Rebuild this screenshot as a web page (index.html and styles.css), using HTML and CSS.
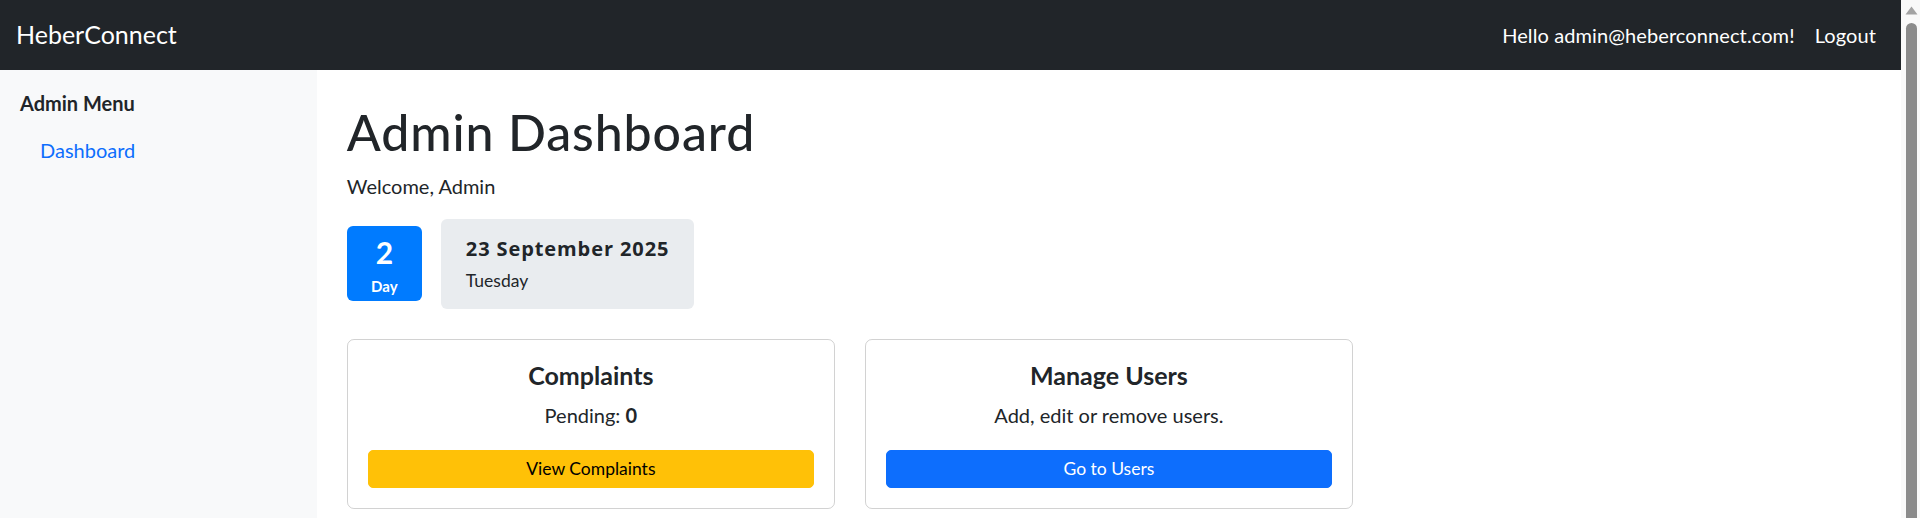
FILE: index.html
```html
<!DOCTYPE html>
<html lang="en">
<head>
<meta charset="utf-8">
<title>Admin Dashboard - HeberConnect</title>
<link rel="stylesheet" href="styles.css">
</head>
<body>
<div class="viewport">
  <nav class="navbar">
    <a class="brand" href="#">HeberConnect</a>
    <div class="nav-right">
      <span class="nav-link">Hello admin@heberconnect.com!</span>
      <a class="nav-link" href="#">Logout</a>
    </div>
  </nav>
  <div class="layout">
    <aside class="sidebar">
      <h6 class="sidebar-title">Admin Menu</h6>
      <ul class="side-nav">
        <li><a class="side-link" href="#">Dashboard</a></li>
      </ul>
    </aside>
    <main class="main">
      <h1 class="page-title">Admin Dashboard</h1>
      <p class="welcome">Welcome, Admin</p>
      <div class="date-row">
        <div class="day-box">
          <span class="day-num">2</span>
          <span class="day-label">Day</span>
        </div>
        <div class="date-box">
          <div class="date-main">23 September 2025</div>
          <div class="date-sub">Tuesday</div>
        </div>
      </div>
      <div class="cards">
        <div class="card">
          <h5 class="card-title">Complaints</h5>
          <p class="card-text">Pending: <strong>0</strong></p>
          <a class="btn btn-warning" href="#">View Complaints</a>
        </div>
        <div class="card">
          <h5 class="card-title">Manage Users</h5>
          <p class="card-text">Add, edit or remove users.</p>
          <a class="btn btn-primary" href="#">Go to Users</a>
        </div>
      </div>
    </main>
  </div>
</div>
<div class="scrollbar">
  <svg class="scroll-arrow" width="13" height="9" viewBox="0 0 13 9"><path d="M6.5 0.5 L12.5 8.5 L0.5 8.5 Z" fill="#a3a3a3"/></svg>
  <div class="scroll-thumb"></div>
</div>
</body>
</html>
```
FILE: styles.css
```css
* { box-sizing: border-box; }

html, body {
  height: 100%;
}

body {
  margin: 0;
  display: flex;
  overflow: hidden;
  font-family: Lato, "Open Sans", sans-serif;
  font-size: 20px;
  line-height: 1.5;
  color: #212529;
  background: #fff;
}

a { text-decoration: none; }

.viewport {
  flex: 1;
  min-width: 0;
  display: flex;
  flex-direction: column;
}

/* Navbar */
.navbar {
  height: 70px;
  flex: 0 0 70px;
  background: #212529;
  display: flex;
  align-items: center;
  justify-content: space-between;
  padding: 0 15px;
}

.brand {
  color: #fff;
  font-size: 25px;
  line-height: 1.5;
  padding: 6px 0;
  margin-left: 1px;
}

.nav-right {
  display: flex;
  align-items: center;
}

.nav-link {
  color: #fff;
  padding: 10px 10px;
  line-height: 30px;
  letter-spacing: 0.1px;
}

/* Layout */
.layout {
  flex: 1;
  display: grid;
  grid-template-columns: minmax(0, 2fr) minmax(0, 10fr);
}

.sidebar {
  background: #f8f9fa;
  padding: 21px 20px 20px 20px;
}

.sidebar-title {
  margin: 0 0 10px 0;
  font-size: 20px;
  font-weight: 700;
  line-height: 1.2;
}

.side-nav {
  list-style: none;
  margin: 0;
  padding: 0;
}

.side-link {
  display: block;
  color: #0d6efd;
  padding: 10px 20px;
  line-height: 30px;
}

.main {
  min-width: 0;
  padding: 32px 30px 30px 30px;
}

.page-title {
  margin: 0 0 9px 0;
  font-size: 50px;
  font-weight: 500;
  line-height: 1.2;
  letter-spacing: 0.9px;
}

.welcome {
  margin: 0 0 18px 0;
}

/* Date */
.date-row {
  display: flex;
  align-items: center;
  gap: 19px;
  margin-bottom: 30px;
}

.day-box {
  width: 75px;
  height: 75px;
  background: #007bff;
  color: #fff;
  border-radius: 6px;
  display: flex;
  flex-direction: column;
  align-items: center;
  justify-content: center;
  font-weight: 700;
}

.day-num {
  font-size: 30px;
  line-height: 45px;
}

.day-label {
  font-size: 15px;
  line-height: 22.5px;
}

.date-box {
  background: #e9ecef;
  border-radius: 6px;
  padding: 15px 25px;
}

.date-main {
  font-family: "Open Sans", Lato, sans-serif;
  font-size: 20px;
  font-weight: 700;
  line-height: 30px;
  margin-bottom: 3.5px;
  letter-spacing: 0.9px;
}

.date-sub {
  font-size: 17.5px;
  line-height: 26.25px;
}

/* Cards */
.cards {
  display: grid;
  grid-template-columns: repeat(3, minmax(0, 1fr));
  column-gap: 30px;
}

.card {
  border: 1px solid rgba(0, 0, 0, 0.175);
  border-radius: 7px;
  padding: 20px;
  text-align: center;
}

.card-title {
  margin: 0 0 10px 0;
  font-size: 25px;
  font-weight: 700;
  line-height: 30px;
}

.card-text {
  margin: 0 0 20px 0;
  line-height: 30px;
}

.btn {
  display: block;
  width: 100%;
  font-size: 17.5px;
  line-height: 26.25px;
  padding: 5px 12px;
  border: 1.25px solid transparent;
  border-radius: 5px;
  text-align: center;
}

.btn-warning {
  background: #ffc107;
  border-color: #ffc107;
  color: #000;
}

.btn-primary {
  background: #0d6efd;
  border-color: #0d6efd;
  color: #fff;
}

/* Scrollbar */
.scrollbar {
  width: 19px;
  flex: 0 0 19px;
  background: #f9f9f9;
  display: flex;
  flex-direction: column;
  align-items: center;
  padding-top: 6px;
}

.scroll-arrow {
  display: block;
  margin-left: 1px;
}

.scroll-thumb {
  margin-top: 8px;
  width: 11px;
  flex: 1;
  margin-left: 1px;
  background: #8b8b8b;
  border-radius: 6px 6px 0 0;
}
```
